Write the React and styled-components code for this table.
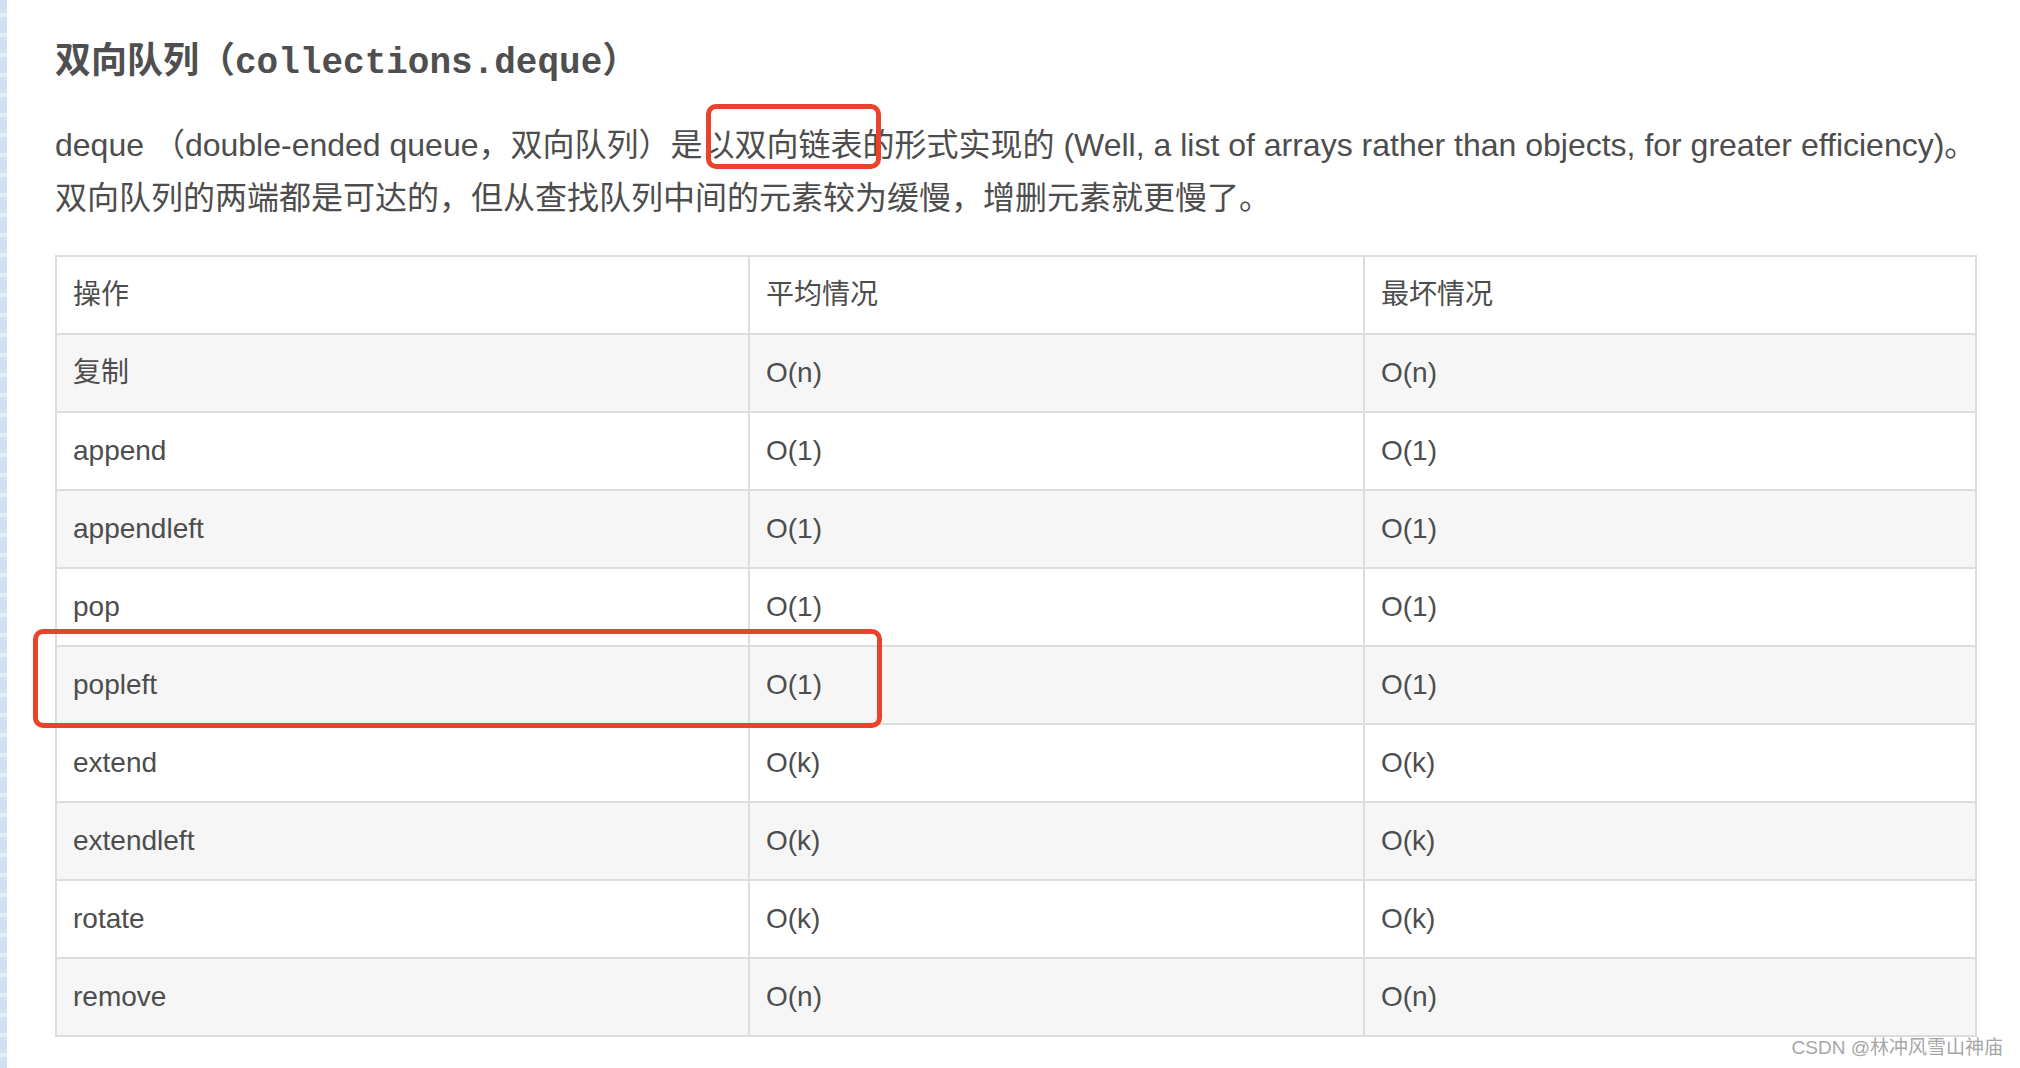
import styled, { createGlobalStyle } from 'styled-components';

const RED = '#e9432b';

const GlobalStyle = createGlobalStyle`
  html, body {
    margin: 0;
    padding: 0;
    background: #fff;
  }
  body {
    font-family: "Liberation Sans", "Noto Sans CJK SC", sans-serif;
    color: #4d4d4d;
  }
`;

const Page = styled.div`
  position: relative;
  display: flex;
  min-height: 100vh;
`;

// light blue edge of the neighbouring panel
const SideStrip = styled.div`
  flex: 0 0 7px;
  background: repeating-linear-gradient(
    to bottom,
    #cfe1f2 0,
    #cfe1f2 13px,
    #e3eef8 13px,
    #e3eef8 17px,
    #cfe1f2 17px,
    #cfe1f2 20px
  );
`;

const Article = styled.article`
  flex: 1;
  padding: 36px 43px 0 48px;
`;

const Heading = styled.h3`
  margin: 0;
  font-size: 36px;
  line-height: 49px;
  font-weight: bold;
  color: #4f4f4f;
  font-family: "Liberation Sans", "Noto Sans CJK SC", sans-serif;
`;

const Code = styled.code`
  font-family: "Liberation Mono", "DejaVu Sans Mono", monospace;
  font-weight: bold;
  font-size: 36px;
`;

const Paragraph = styled.p`
  margin: 31px 0 0;
  font-size: 32px;
  line-height: 53px;
  color: #4d4d4d;
  white-space: nowrap;
`;

const Marked = styled.span`
  position: relative;
  display: inline-block;

  &::after {
    content: '';
    position: absolute;
    left: 3px;
    right: -18px;
    top: -15px;
    height: 65px;
    box-sizing: border-box;
    border: 5px solid ${RED};
    border-radius: 10px;
    pointer-events: none;
  }
`;

const TableWrap = styled.div`
  position: relative;
  margin-top: 30px;
`;

const Table = styled.table`
  width: 100%;
  border-collapse: collapse;
  table-layout: fixed;
  font-size: 28px;
  color: #4d4d4d;

  tbody tr:nth-child(odd) {
    background: #f6f6f6;
  }
`;

const Cell = styled.td`
  border: 2px solid #dddddd;
  padding: 17px 16px;
  line-height: 42px;
  text-align: left;
  font-weight: normal;
`;

const HeadCell = styled(Cell).attrs({ as: 'th' })``;

const RowMark = styled.div`
  position: absolute;
  left: -22px;
  top: 374px;
  width: 849px;
  height: 99px;
  box-sizing: border-box;
  border: 5px solid ${RED};
  border-radius: 10px;
  pointer-events: none;
`;

const Watermark = styled.div`
  position: absolute;
  right: 17px;
  bottom: 8px;
  font-size: 19px;
  line-height: 24px;
  color: #a6a6a6;
`;

const ROWS = [
  ['复制', 'O(n)', 'O(n)'],
  ['append', 'O(1)', 'O(1)'],
  ['appendleft', 'O(1)', 'O(1)'],
  ['pop', 'O(1)', 'O(1)'],
  ['popleft', 'O(1)', 'O(1)'],
  ['extend', 'O(k)', 'O(k)'],
  ['extendleft', 'O(k)', 'O(k)'],
  ['rotate', 'O(k)', 'O(k)'],
  ['remove', 'O(n)', 'O(n)'],
];

export default function App() {
  return (
    <Page>
      <GlobalStyle />
      <SideStrip />
      <Article>
        <Heading>
          双向队列（<Code>collections.deque</Code>）
        </Heading>
        <Paragraph>
          deque （double-ended queue，双向队列）是<Marked>以双向链表</Marked>的形式实现的 (Well, a list of arrays rather than objects, for greater efficiency)。
          <br />
          双向队列的两端都是可达的，但从查找队列中间的元素较为缓慢，增删元素就更慢了。
        </Paragraph>
        <TableWrap>
          <Table>
            <colgroup>
              <col style={{ width: 693 }} />
              <col style={{ width: 615 }} />
              <col />
            </colgroup>
            <thead>
              <tr>
                <HeadCell>操作</HeadCell>
                <HeadCell>平均情况</HeadCell>
                <HeadCell>最坏情况</HeadCell>
              </tr>
            </thead>
            <tbody>
              {ROWS.map((row) => (
                <tr key={row[0]}>
                  {row.map((v, i) => (
                    <Cell key={i}>{v}</Cell>
                  ))}
                </tr>
              ))}
            </tbody>
          </Table>
          <RowMark />
        </TableWrap>
      </Article>
      <Watermark>CSDN @林冲风雪山神庙</Watermark>
    </Page>
  );
}
